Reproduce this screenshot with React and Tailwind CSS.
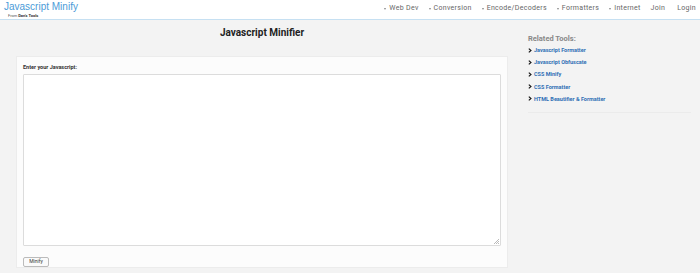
import React from "react";

const nav = ["Web Dev", "Conversion", "Encode/Decoders", "Formatters", "Internet"];
const links = [
  "Javascript Formatter",
  "Javascript Obfuscate",
  "CSS Minify",
  "CSS Formatter",
  "HTML Beautifier & Formatter",
];

export default function App() {
  return (
    <div className="w-[700px] h-[273px] bg-[#f3f3f3] overflow-hidden" style={{ fontFamily: "Roboto, 'Liberation Sans', sans-serif" }}>
      <header className="h-[20px] bg-white border-b border-[#c6e0f2] flex items-start justify-between">
        <div className="pl-[4px] pt-[1px] leading-none">
          <div className="text-[10px] text-[#4b9bd8] leading-[11px]" style={{ fontFamily: "'Liberation Sans', Arial, sans-serif" }}>Javascript Minify</div>
          <div className="text-[4px] text-[#555] pl-[4px] mt-[2px] leading-[4px]">From <span className="font-bold text-[#333]">Dan's Tools</span></div>
        </div>
        <nav className="flex items-center h-[17px] text-[7px] text-[#666] font-normal tracking-[0.3px] pr-[4px]">
          {nav.map((n) => (
            <span key={n} className="flex items-center mr-[10px]">
              <span className="inline-block w-0 h-0 border-l-[1.5px] border-r-[1.5px] border-t-[2px] border-l-transparent border-r-transparent border-t-[#888] mr-[3px]" />
              {n}
            </span>
          ))}
          <span className="mr-[12px]">Join</span>
          <span>Login</span>
        </nav>
      </header>
      <div className="flex">
        <main className="w-[492px] ml-[16px]">
          <h1 className="text-center text-[10px] font-bold text-[#222] mt-[6px] leading-[13px]">Javascript Minifier</h1>
          <div className="mt-[17px] bg-[#fcfcfc] border border-[#ececec] h-[212px] px-[6px] pt-[7px]">
            <div className="text-[5.5px] font-bold text-[#333] leading-[7px]">Enter your Javascript:</div>
            <div className="relative mt-[3px] h-[172px] bg-white border border-[#dcdcdc] rounded-[1px]">
              <svg className="absolute right-[1px] bottom-[1px]" width="5" height="5" viewBox="0 0 5 5">
                <path d="M5 0 L0 5 M5 2 L2 5 M5 4 L4 5" stroke="#aaa" strokeWidth="0.8" />
              </svg>
            </div>
            <button className="mt-[6px] h-[10px] w-[26px] bg-[#fafafa] border border-[#bbb] rounded-[2px] text-[5px] text-[#333] leading-none">Minify</button>
          </div>
        </main>
        <aside className="ml-[20px] w-[163px] pt-[14px]">
          <div className="text-[7.5px] font-bold text-[#888] leading-[10px]">Related Tools:</div>
          <ul className="mt-[0px]">
            {links.map((l) => (
              <li key={l} className="flex items-center h-[12.2px] text-[5.5px] font-bold text-[#2f6fb5]">
                <svg width="4" height="5" viewBox="0 0 4 5" className="mr-[2px]">
                  <path d="M0.8 0.6 L3 2.5 L0.8 4.4" fill="none" stroke="#111" strokeWidth="1.1" />
                </svg>
                {l}
              </li>
            ))}
          </ul>
          <div className="mt-[7px] border-t border-[#ebebeb]" />
        </aside>
      </div>
    </div>
  );
}
